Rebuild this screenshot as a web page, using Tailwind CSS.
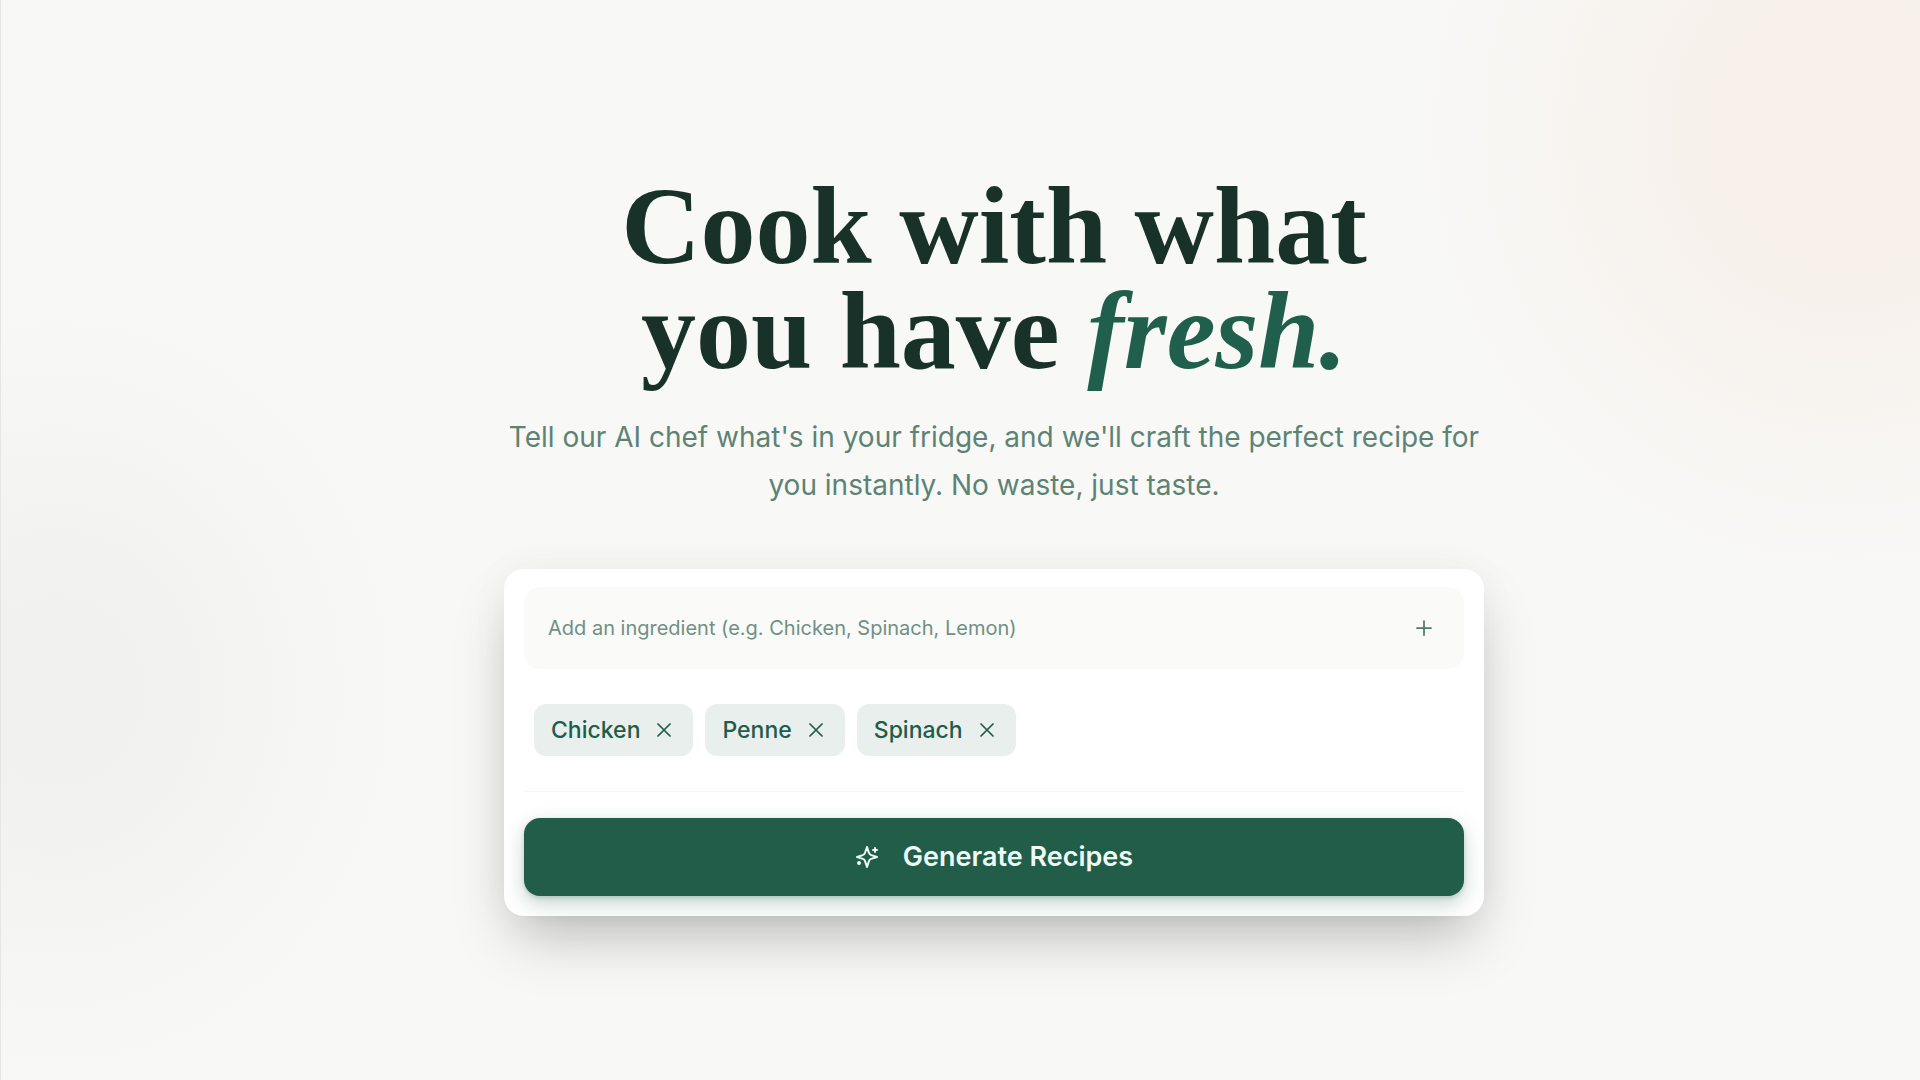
<!DOCTYPE html>
<html lang="en">
<head>
<meta charset="utf-8">
<meta name="viewport" content="width=device-width, initial-scale=1">
<title>Cook with what you have fresh</title>
<script src="https://cdn.jsdelivr.net/npm/@tailwindcss/browser@4"></script>
</head>
<body class="min-h-screen border-l border-[#e6e6e4] bg-[#f8f8f6] bg-[radial-gradient(ellipse_420px_440px_at_96%_12%,#f7f0eb_0%,#f7f1ec_35%,transparent_100%),radial-gradient(ellipse_340px_380px_at_3%_64%,#f0f0ef_0%,#f2f2f1_35%,transparent_100%)] bg-no-repeat font-['Inter',sans-serif] text-[#1f5c4a]">
<main class="flex min-h-screen flex-col items-center pt-[174px] pr-4 pb-16 pl-[83px]">
  <h1 class="text-center font-['Liberation_Serif',serif] text-[110px] leading-[105px] font-bold text-[#18322a]">Cook with what<br>you have <em class="text-[#1f5f4b]">fresh.</em></h1>
  <p class="mt-[29px] w-full max-w-[980px] text-center text-[28px] leading-12 text-[#5d8374]">Tell our AI chef what's in your fridge, and we'll craft the perfect recipe for<br>you instantly. No waste, just taste.</p>

  <form class="mt-[60px] w-full max-w-[980px] rounded-[20px] bg-white px-5 pt-[18px] pb-5 shadow-[0_30px_60px_-12px_rgba(0,0,0,0.25),0_0_40px_rgba(0,0,0,0.04)]" onsubmit="return false">
    <div class="flex h-[82px] items-center rounded-2xl bg-[#fafaf9] px-6">
      <input type="text" aria-label="Ingredient" placeholder="Add an ingredient (e.g. Chicken, Spinach, Lemon)" class="min-w-0 flex-1 bg-transparent text-[20px] leading-7 outline-none placeholder:text-[#6f9084]">
      <button type="button" aria-label="Add ingredient" class="flex size-8 items-center justify-center text-[#4f7a6b]">
        <svg class="size-6" viewBox="0 0 24 24" fill="none" stroke="currentColor" stroke-width="1.750" stroke-linecap="round"><path d="M5 12h14M12 5v14"/></svg>
      </button>
    </div>
    <ul class="mt-[35px] flex flex-wrap gap-3 px-2.5 text-[23px] leading-8 font-medium">
      <li class="flex h-13 items-center gap-3 rounded-xl bg-[#e8efed] px-[17px]">Chicken
        <button type="button" aria-label="Remove Chicken" class="flex size-6 items-center justify-center"><svg class="size-6" viewBox="0 0 24 24" fill="none" stroke="currentColor" stroke-width="1.750" stroke-linecap="round"><path d="M6 6l12 12M18 6L6 18"/></svg></button></li>
      <li class="flex h-13 items-center gap-3 rounded-xl bg-[#e8efed] px-[17px]">Penne
        <button type="button" aria-label="Remove Penne" class="flex size-6 items-center justify-center"><svg class="size-6" viewBox="0 0 24 24" fill="none" stroke="currentColor" stroke-width="1.750" stroke-linecap="round"><path d="M6 6l12 12M18 6L6 18"/></svg></button></li>
      <li class="flex h-13 items-center gap-3 rounded-xl bg-[#e8efed] px-[17px]">Spinach
        <button type="button" aria-label="Remove Spinach" class="flex size-6 items-center justify-center"><svg class="size-6" viewBox="0 0 24 24" fill="none" stroke="currentColor" stroke-width="1.750" stroke-linecap="round"><path d="M6 6l12 12M18 6L6 18"/></svg></button></li>
    </ul>
    <div class="mt-[35px] border-t border-[#f6f6f5] pt-[26px]">
      <button type="submit" class="flex h-[78px] w-full items-center justify-center gap-6 rounded-2xl bg-[#225d4a] text-[27px] leading-9 font-semibold text-[#eefaf5] shadow-[0_8px_20px_rgba(34,93,74,0.25),0_2px_4px_rgba(34,93,74,0.2)]">
        <svg class="size-6" viewBox="0 0 24 24" fill="none" stroke="currentColor" stroke-width="2" stroke-linecap="round" stroke-linejoin="round"><path d="M12 2l1.900 5.800a3.500 3.500 0 0 0 2.300 2.300L22 12l-5.800 1.900a3.500 3.500 0 0 0-2.300 2.300L12 22l-1.900-5.800a3.500 3.500 0 0 0-2.300-2.300L2 12l5.800-1.900a3.500 3.500 0 0 0 2.300-2.300z"/><path d="M20 3v4M22 5h-4"/><circle cx="4" cy="18" r="1" fill="currentColor"/></svg>
        Generate Recipes
      </button>
    </div>
  </form>
</main>
</body>
</html>
